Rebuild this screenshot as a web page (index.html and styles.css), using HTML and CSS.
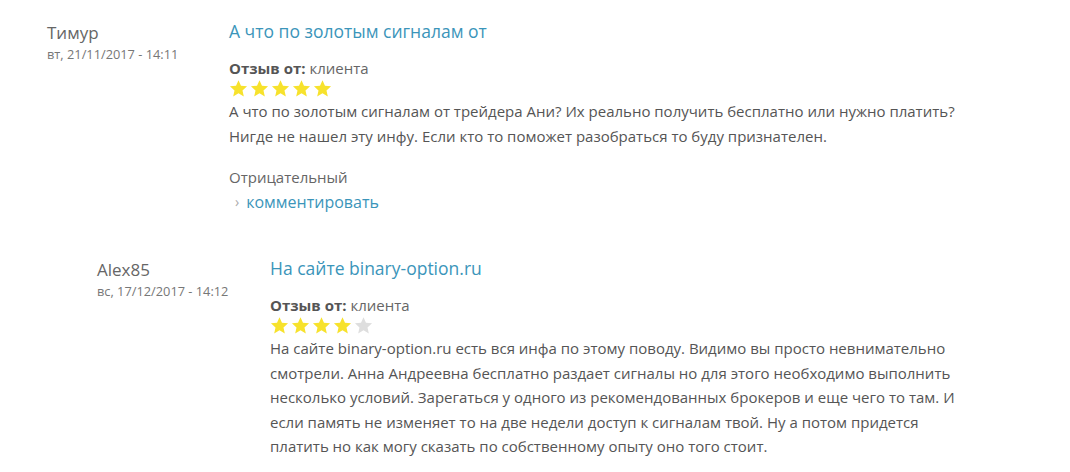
FILE: index.html
```html
<!DOCTYPE html>
<html lang="ru">
<head>
<meta charset="utf-8">
<link rel="stylesheet" href="styles.css">
</head>
<body>
<div class="comments">
  <article class="comment">
    <div class="meta">
      <div class="author">Тимур</div>
      <div class="date">вт, 21/11/2017 - 14:11</div>
    </div>
    <div class="content">
      <h3 class="title"><a href="#">А что по золотым сигналам от</a></h3>
      <div class="from"><b>Отзыв от:</b> клиента</div>
      <div class="stars" data-rating="5">
        <svg class="star on" viewBox="0 0 20 20"><path d="M10 1.2l2.6 5.9 6.4.6-4.8 4.3 1.4 6.3L10 15l-5.6 3.3 1.4-6.3L1 7.7l6.4-.6z"/></svg>
        <svg class="star on" viewBox="0 0 20 20"><path d="M10 1.2l2.6 5.9 6.4.6-4.8 4.3 1.4 6.3L10 15l-5.6 3.3 1.4-6.3L1 7.7l6.4-.6z"/></svg>
        <svg class="star on" viewBox="0 0 20 20"><path d="M10 1.2l2.6 5.9 6.4.6-4.8 4.3 1.4 6.3L10 15l-5.6 3.3 1.4-6.3L1 7.7l6.4-.6z"/></svg>
        <svg class="star on" viewBox="0 0 20 20"><path d="M10 1.2l2.6 5.9 6.4.6-4.8 4.3 1.4 6.3L10 15l-5.6 3.3 1.4-6.3L1 7.7l6.4-.6z"/></svg>
        <svg class="star on" viewBox="0 0 20 20"><path d="M10 1.2l2.6 5.9 6.4.6-4.8 4.3 1.4 6.3L10 15l-5.6 3.3 1.4-6.3L1 7.7l6.4-.6z"/></svg>
      </div>
      <p class="body">А что по золотым сигналам от трейдера Ани? Их реально получить бесплатно или нужно платить? Нигде не нашел эту инфу. Если кто то поможет разобраться то буду признателен.</p>
      <div class="verdict">Отрицательный</div>
      <ul class="links"><li><a href="#">комментировать</a></li></ul>
    </div>
  </article>

  <article class="comment reply">
    <div class="meta">
      <div class="author">Alex85</div>
      <div class="date">вс, 17/12/2017 - 14:12</div>
    </div>
    <div class="content">
      <h3 class="title"><a href="#">На сайте binary-option.ru</a></h3>
      <div class="from"><b>Отзыв от:</b> клиента</div>
      <div class="stars" data-rating="4">
        <svg class="star on" viewBox="0 0 20 20"><path d="M10 1.2l2.6 5.9 6.4.6-4.8 4.3 1.4 6.3L10 15l-5.6 3.3 1.4-6.3L1 7.7l6.4-.6z"/></svg>
        <svg class="star on" viewBox="0 0 20 20"><path d="M10 1.2l2.6 5.9 6.4.6-4.8 4.3 1.4 6.3L10 15l-5.6 3.3 1.4-6.3L1 7.7l6.4-.6z"/></svg>
        <svg class="star on" viewBox="0 0 20 20"><path d="M10 1.2l2.6 5.9 6.4.6-4.8 4.3 1.4 6.3L10 15l-5.6 3.3 1.4-6.3L1 7.7l6.4-.6z"/></svg>
        <svg class="star on" viewBox="0 0 20 20"><path d="M10 1.2l2.6 5.9 6.4.6-4.8 4.3 1.4 6.3L10 15l-5.6 3.3 1.4-6.3L1 7.7l6.4-.6z"/></svg>
        <svg class="star off" viewBox="0 0 20 20"><path d="M10 1.2l2.6 5.9 6.4.6-4.8 4.3 1.4 6.3L10 15l-5.6 3.3 1.4-6.3L1 7.7l6.4-.6z"/></svg>
      </div>
      <p class="body">На сайте binary-option.ru есть вся инфа по этому поводу. Видимо вы просто невнимательно смотрели. Анна Андреевна бесплатно раздает сигналы но для этого необходимо выполнить несколько условий. Зарегаться у одного из рекомендованных брокеров и еще чего то там. И если память не изменяет то на две недели доступ к сигналам твой. Ну а потом придется платить но как могу сказать по собственному опыту оно того стоит.</p>
    </div>
  </article>
</div>
</body>
</html>
```
FILE: styles.css
```css
html, body {
  margin: 0;
  padding: 0;
  background: #fff;
}
body {
  font-family: "Open Sans", "Noto Sans", sans-serif;
  color: #555;
}
.comments {
  padding: 19px 100px 0 47px;
}
.comment {
  display: flex;
  align-items: flex-start;
}
.comment.reply {
  margin-left: 50px;
  margin-top: 42px;
}
.meta {
  width: 182px;
  flex: none;
  padding-top: 2px;
}
.reply .meta {
  width: 173px;
}
.author {
  font-size: 17px;
  line-height: 24px;
  color: #666;
}
.date {
  font-size: 12.8px;
  line-height: 18px;
  color: #777;
}
.content {
  flex: 1;
  min-width: 0;
}
.title {
  margin: 0;
  font-size: 17.5px;
  line-height: 24px;
  font-weight: 400;
}
.title a, .links a {
  color: #3b95ba;
  text-decoration: none;
}
.from {
  margin-top: 15px;
  font-size: 15px;
  line-height: 20px;
  color: #666;
}
.from b {
  color: #555;
  font-weight: 700;
}
.stars {
  display: flex;
  gap: 2px;
  height: 20px;
  align-items: center;
}
.star {
  width: 19px;
  height: 19px;
}
.star.on { fill: #f7e22c; }
.star.off { fill: #dedede; }
.body {
  margin: 1px 0 0;
  font-size: 15px;
  line-height: 24.5px;
  color: #555;
}
.verdict {
  margin-top: 18px;
  font-size: 15px;
  line-height: 22px;
  color: #666;
}
.links {
  list-style: none;
  margin: 2px 0 0;
  padding: 0 0 0 6px;
}
.links li {
  font-size: 16px;
  line-height: 24px;
  display: flex;
  align-items: center;
  gap: 7px;
}
.links li::before {
  content: "›";
  color: #aaa;
  font-size: 14px;
}
```
